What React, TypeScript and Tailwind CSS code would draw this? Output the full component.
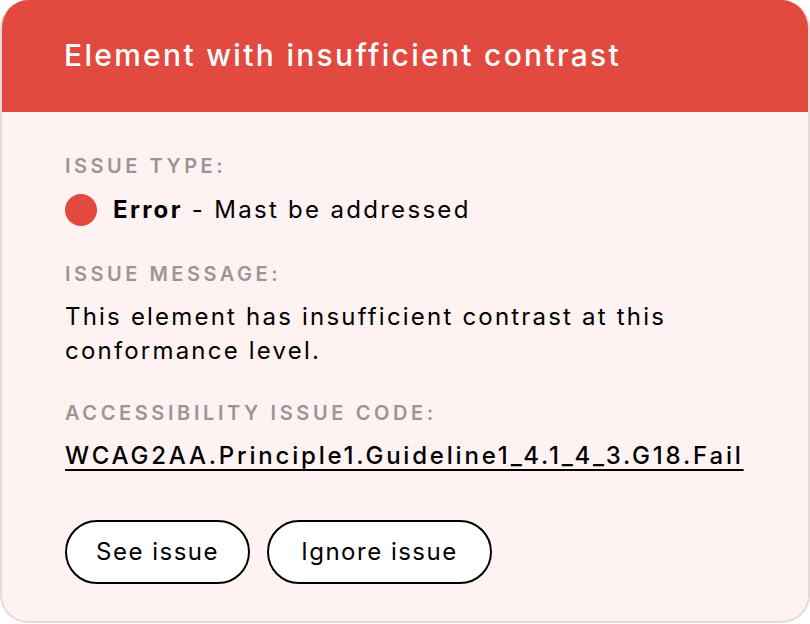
export default function App() {
  return (
    <div className="w-[810px] h-[624px] bg-white font-['Inter',sans-serif]">
      <div className="h-[623px] rounded-[28px] overflow-hidden border-2 border-t-0 border-[#e3dada] bg-[#fef3f2] flex flex-col">
        <header className="h-[112px] bg-[#e24a40] flex items-center pl-[62px] shrink-0">
          <h1 className="text-white text-[30px] font-medium tracking-[2.3px] -mt-[2px]">
            Element with insufficient contrast
          </h1>
        </header>
        <div className="pl-[63px] pr-8 pt-[40px] flex flex-col text-black">
          <p className="text-[20px] font-semibold tracking-[3.5px] text-[#9a9696] leading-[28px]">ISSUE TYPE:</p>
          <div className="flex items-center gap-4 mt-[14px] h-[32px]">
            <span className="w-8 h-8 rounded-full bg-[#e24a40] shrink-0" />
            <p className="text-[24px] leading-[32px] tracking-[2.3px]">
              <span className="font-bold">Error</span> - Mast be addressed
            </p>
          </div>
          <p className="text-[20px] font-semibold tracking-[3.5px] text-[#9a9696] leading-[28px] mt-[34px]">ISSUE MESSAGE:</p>
          <p className="text-[24px] leading-[34px] tracking-[2.2px] mt-[12px] max-w-[700px]">
            This element has insufficient contrast at this conformance level.
          </p>
          <p className="text-[20px] font-semibold tracking-[3.6px] text-[#9a9696] leading-[28px] mt-[31px]">ACCESSIBILITY ISSUE CODE:</p>
          <a href="#" className="text-[24px] font-medium leading-[34px] tracking-[2.8px] mt-[12px] underline underline-offset-[5px] decoration-[2px] w-fit">
            WCAG2AA.Principle1.Guideline1_4.1_4_3.G18.Fail
          </a>
          <div className="flex gap-[17px] mt-[47px]">
            <button className="h-[64px] w-[185px] rounded-full border-2 border-black bg-white text-[24px] tracking-[1.5px]">See issue</button>
            <button className="h-[64px] w-[225px] rounded-full border-2 border-black bg-white text-[24px] tracking-[1.5px]">Ignore issue</button>
          </div>
        </div>
      </div>
    </div>
  );
}
